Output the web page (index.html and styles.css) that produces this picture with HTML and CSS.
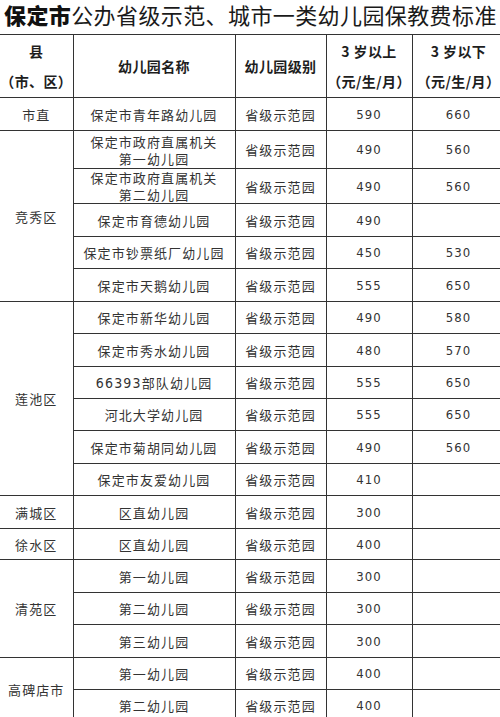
FILE: index.html
```html
<!DOCTYPE html>
<html lang="zh">
<head>
<meta charset="utf-8">
<title>保定市公办省级示范、城市一类幼儿园保教费标准</title>
<link rel="stylesheet" href="styles.css">
</head>
<body>
<div class="title"><b>保定市</b>公办省级示范、城市一类幼儿园保教费标准</div>
<table class="fees">
  <colgroup>
    <col class="c1"><col class="c2"><col class="c3"><col class="c4"><col class="c5">
  </colgroup>
  <thead>
    <tr class="h63">
      <th class="first">县<br>（市、区）</th>
      <th>幼儿园名称</th>
      <th>幼儿园级别</th>
      <th>3 岁以上<br>（元/生/月）</th>
      <th>3 岁以下<br>（元/生/月）</th>
    </tr>
  </thead>
  <tbody>
    <tr class="h33"><td class="first">市直</td><td>保定市青年路幼儿园</td><td>省级示范园</td><td class="num">590</td><td class="num">660</td></tr>
    <tr class="h38"><td class="first" rowspan="5">竞秀区</td><td class="two"><span class="ln">保定市政府直属机关</span><span class="ln">第一幼儿园</span></td><td>省级示范园</td><td class="num">490</td><td class="num">560</td></tr>
    <tr class="h35"><td class="two"><span class="ln">保定市政府直属机关</span><span class="ln">第二幼儿园</span></td><td>省级示范园</td><td class="num">490</td><td class="num">560</td></tr>
    <tr class="h33"><td>保定市育德幼儿园</td><td>省级示范园</td><td class="num">490</td><td class="num"></td></tr>
    <tr class="h32"><td>保定市钞票纸厂幼儿园</td><td>省级示范园</td><td class="num">450</td><td class="num">530</td></tr>
    <tr class="h33"><td>保定市天鹅幼儿园</td><td>省级示范园</td><td class="num">555</td><td class="num">650</td></tr>
    <tr class="h32"><td class="first" rowspan="6">莲池区</td><td>保定市新华幼儿园</td><td>省级示范园</td><td class="num">490</td><td class="num">580</td></tr>
    <tr class="h33"><td>保定市秀水幼儿园</td><td>省级示范园</td><td class="num">480</td><td class="num">570</td></tr>
    <tr class="h32"><td><span class="num">66393</span>部队幼儿园</td><td>省级示范园</td><td class="num">555</td><td class="num">650</td></tr>
    <tr class="h32"><td>河北大学幼儿园</td><td>省级示范园</td><td class="num">555</td><td class="num">650</td></tr>
    <tr class="h33"><td>保定市菊胡同幼儿园</td><td>省级示范园</td><td class="num">490</td><td class="num">560</td></tr>
    <tr class="h32"><td>保定市友爱幼儿园</td><td>省级示范园</td><td class="num">410</td><td class="num"></td></tr>
    <tr class="h33"><td class="first">满城区</td><td>区直幼儿园</td><td>省级示范园</td><td class="num">300</td><td class="num"></td></tr>
    <tr class="h31"><td class="first">徐水区</td><td>区直幼儿园</td><td>省级示范园</td><td class="num">400</td><td class="num"></td></tr>
    <tr class="h33"><td class="first" rowspan="3">清苑区</td><td>第一幼儿园</td><td>省级示范园</td><td class="num">300</td><td class="num"></td></tr>
    <tr class="h32"><td>第二幼儿园</td><td>省级示范园</td><td class="num">300</td><td class="num"></td></tr>
    <tr class="h33"><td>第三幼儿园</td><td>省级示范园</td><td class="num">300</td><td class="num"></td></tr>
    <tr class="h32"><td class="first" rowspan="2">高碑店市</td><td>第一幼儿园</td><td>省级示范园</td><td class="num">400</td><td class="num"></td></tr>
    <tr class="h32"><td>第二幼儿园</td><td>省级示范园</td><td class="num">400</td><td class="num"></td></tr>
  </tbody>
</table>
</body>
</html>
```
FILE: styles.css
```css
html, body {
  margin: 0;
  padding: 0;
  background: #ffffff;
  overflow: hidden;
}

body {
  width: 500px;
  height: 717px;
  font-family: "Noto Sans CJK SC", "Noto Sans", sans-serif;
  color: #2a2a2a;
}

.title {
  height: 34px;
  box-sizing: border-box;
  padding-left: 4px;
  font-size: 22px;
  line-height: 29px;
  letter-spacing: 0.4px;
  white-space: nowrap;
  color: #1a1a1a;
  font-weight: 400;
}

.title b {
  font-weight: 900;
  color: #111;
}

.fees {
  border-collapse: collapse;
  table-layout: fixed;
  width: 505px;
}

.c1 { width: 73px; }
.c2 { width: 162px; }
.c3 { width: 91px; }
.c4 { width: 86px; }
.c5 { width: 93px; }

.fees th,
.fees td {
  border: 1px solid #333;
  padding: 0;
  text-align: center;
  vertical-align: middle;
  white-space: nowrap;
}

.fees th.first,
.fees td.first {
  border-left: none;
}

.fees th {
  font-size: 14px;
  font-weight: 700;
  line-height: 30px;
  letter-spacing: 0.4px;
  color: #1e1e1e;
}

.fees td {
  font-size: 13px;
  line-height: 17px;
  letter-spacing: 1.1px;
  color: #333;
}

.fees td.two .ln {
  display: block;
  line-height: 17px;
}

.num {
  font-family: "Liberation Sans Narrow", "DejaVu Sans Condensed", "Liberation Sans", sans-serif;
  font-size: 14px;
  letter-spacing: 1.2px;
}

.h63 { height: 63px; }
.h38 { height: 38px; }
.h35 { height: 35px; }
.h33 { height: 33px; }
.h32 { height: 32px; }
.h31 { height: 31px; }
```
